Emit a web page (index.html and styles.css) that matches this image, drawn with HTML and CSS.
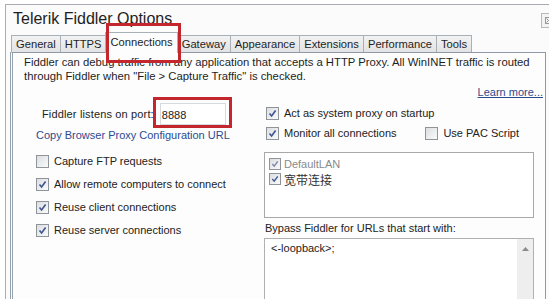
FILE: index.html
```html
<!DOCTYPE html>
<html>
<head>
<meta charset="utf-8">
<link rel="stylesheet" href="styles.css">
</head>
<body>
<div class="window">
  <div class="titlebar">
    <span class="title">Telerik Fiddler Options</span>
    <span class="close"><svg width="7" height="7" viewBox="0 0 7 7"><rect x="0.5" y="0.5" width="6" height="6" fill="none" stroke="#9a9a9a"/><path d="M1.5 1.5 L5.5 5.5 M5.5 1.5 L1.5 5.5" stroke="#9a9a9a"/></svg></span>
  </div>
  <div class="tabs">
    <span class="tab">General</span>
    <span class="tab">HTTPS</span>
    <span class="tab active">Connections</span>
    <span class="tab">Gateway</span>
    <span class="tab">Appearance</span>
    <span class="tab">Extensions</span>
    <span class="tab">Performance</span>
    <span class="tab">Tools</span>
  </div>
  <div class="panel">
    <p class="desc">Fiddler can debug traffic from any application that accepts a HTTP Proxy. All WinINET traffic is routed<br>through Fiddler when "File &gt; Capture Traffic" is checked.</p>
    <div class="learn"><span class="link underline">Learn more...</span></div>
    <div class="cols">
      <div class="left">
        <div class="port-row">
          <span class="label">Fiddler listens on port:</span>
          <span class="input">8888</span>
        </div>
        <span class="link copy">Copy Browser Proxy Configuration URL</span>
        <div class="checks">
          <label class="check"><span class="box"></span>Capture FTP requests</label>
          <label class="check"><span class="box on"><svg width="9" height="9" viewBox="0 0 9 9"><path d="M1.5 4.5 L3.6 7 L7.6 1.5" fill="none" stroke="#3d5590" stroke-width="1.6"/></svg></span>Allow remote computers to connect</label>
          <label class="check"><span class="box on"><svg width="9" height="9" viewBox="0 0 9 9"><path d="M1.5 4.5 L3.6 7 L7.6 1.5" fill="none" stroke="#3d5590" stroke-width="1.6"/></svg></span>Reuse client connections</label>
          <label class="check"><span class="box on"><svg width="9" height="9" viewBox="0 0 9 9"><path d="M1.5 4.5 L3.6 7 L7.6 1.5" fill="none" stroke="#3d5590" stroke-width="1.6"/></svg></span>Reuse server connections</label>
        </div>
      </div>
      <div class="right">
        <label class="check act"><span class="box on"><svg width="9" height="9" viewBox="0 0 9 9"><path d="M1.5 4.5 L3.6 7 L7.6 1.5" fill="none" stroke="#3d5590" stroke-width="1.6"/></svg></span>Act as system proxy on startup</label>
        <div class="monitor-row">
          <label class="check"><span class="box on"><svg width="9" height="9" viewBox="0 0 9 9"><path d="M1.5 4.5 L3.6 7 L7.6 1.5" fill="none" stroke="#3d5590" stroke-width="1.6"/></svg></span>Monitor all connections</label>
          <label class="check pac"><span class="box"></span>Use PAC Script</label>
        </div>
        <div class="listbox">
          <div class="item grey"><span class="box small on"><svg width="8" height="8" viewBox="0 0 9 9"><path d="M1.5 4.5 L3.6 7 L7.6 1.5" fill="none" stroke="#7a86a8" stroke-width="1.5"/></svg></span>DefaultLAN</div>
          <div class="item cjk"><span class="box small on"><svg width="8" height="8" viewBox="0 0 9 9"><path d="M1.5 4.5 L3.6 7 L7.6 1.5" fill="none" stroke="#3d5590" stroke-width="1.5"/></svg></span>宽带连接</div>
        </div>
        <div class="bypass-label">Bypass Fiddler for URLs that start with:</div>
        <div class="textarea">
          <span class="loop">&lt;-loopback&gt;;</span>
          <span class="scrollbar"><svg width="7" height="4" viewBox="0 0 7 4"><path d="M0 4 L3.5 0 L7 4 Z" fill="#8a8a8a"/></svg></span>
        </div>
      </div>
    </div>
  </div>
  <div class="mark mark-tab"></div>
  <div class="mark mark-port"></div>
</div>
</body>
</html>
```
FILE: styles.css
```css
html, body {
  margin: 0;
  padding: 0;
  background: #ffffff;
  overflow: hidden;
  width: 549px;
  height: 299px;
}
body {
  font-family: "Liberation Sans", Arial, sans-serif;
  font-size: 11px;
  color: #222;
}
.window {
  position: relative;
  margin: 4px 0 0 5px;
  width: 548px;
  height: 320px;
  border: 1px solid #a9adb2;
  border-bottom: none;
  background: #fbfbfb;
  box-sizing: border-box;
}
.titlebar {
  height: 26px;
  display: flex;
  align-items: center;
  justify-content: space-between;
  padding-left: 7px;
}
.title {
  font-size: 16px;
  color: #1e1e1e;
  margin-top: 1px;
}
.close {
  width: 8px;
  height: 13px;
  border: 1px solid #b8b8b8;
  border-right: none;
  display: flex;
  align-items: center;
  justify-content: center;
  background: #f3f3f3;
  margin-top: 4px;
  padding-left: 2px;
}
.tabs {
  display: flex;
  align-items: flex-end;
  padding-left: 5px;
  height: 21px;
  position: relative;
  z-index: 2;
}
.tab {
  height: 16px;
  line-height: 16px;
  padding: 0 4px;
  font-size: 11.2px;
  border: 1px solid #a8b0b8;
  border-bottom: none;
  border-right: none;
  background: linear-gradient(#f2f2f2, #e3e3e3);
  color: #1e1e1e;
}
.tab.active {
  height: 20px;
  line-height: 18px;
  background: #fdfdfd;
  border-right: 1px solid #a8b0b8;
  margin-bottom: -1px;
}
.tab.active + .tab {
  border-left: none;
}
.tabs .tab:last-child {
  border-right: 1px solid #a8b0b8;
}
.panel {
  margin-left: 4px;
  width: 536px;
  height: 260px;
  border: 1px solid #8d9aa5;
  border-left: 3px double #94a2ae;
  box-sizing: border-box;
  background: #fdfdfd;
  padding: 2px 2px 0 11px;
}
.desc {
  margin: 0;
  line-height: 14px;
  font-size: 11.3px;
  color: #1e1e1e;
  white-space: nowrap;
}
.link {
  color: #2e4a8e;
}
.underline {
  text-decoration: underline;
}
.learn {
  display: flex;
  justify-content: flex-end;
  line-height: 14px;
  margin-top: 2px;
}
.cols {
  display: grid;
  grid-template-columns: 240px 270px;
}
.left {
  display: flex;
  flex-direction: column;
  align-items: flex-start;
  padding-left: 12px;
}
.port-row {
  display: flex;
  align-items: center;
  height: 24px;
  margin-top: 3px;
  padding-left: 6px;
}
.label {
  letter-spacing: 0.15px;
  margin-right: 6px;
}
.input {
  width: 66px;
  height: 22px;
  line-height: 22px;
  box-sizing: border-box;
  border: 1px solid #d6d9dd;
  background: #fff;
  padding-left: 1px;
}
.copy {
  line-height: 14px;
  margin-top: 2px;
}
.checks {
  display: flex;
  flex-direction: column;
  gap: 7px;
  margin-top: 11px;
}
.check {
  display: flex;
  align-items: center;
  height: 16px;
  white-space: nowrap;
}
.box {
  width: 13px;
  height: 13px;
  box-sizing: border-box;
  border: 1px solid #8f9498;
  background: linear-gradient(135deg, #dcdee2, #fafafa);
  margin-right: 5px;
  display: flex;
  align-items: center;
  justify-content: center;
  flex-shrink: 0;
}
.box.small {
  width: 12px;
  height: 12px;
  margin-right: 3px;
}
.right {
  display: flex;
  flex-direction: column;
  align-items: flex-start;
}
.act {
  margin-top: 6px;
  margin-left: 2px;
}
.monitor-row {
  display: flex;
  margin-top: 4px;
  margin-left: 2px;
  width: 268px;
}
.pac {
  margin-left: auto;
  margin-right: 15px;
}
.listbox {
  width: 270px;
  height: 66px;
  box-sizing: border-box;
  border: 1px solid #a8a8a8;
  background: #fff;
  margin-top: 11px;
  padding: 3px 0 0 4px;
}
.item {
  display: flex;
  align-items: center;
  height: 16px;
}
.item.grey {
  color: #8a8a8a;
}
.item.cjk {
  font-family: "Noto Sans CJK SC", sans-serif;
  font-size: 12px;
  color: #333;
  margin-top: -1px;
}
.bypass-label {
  line-height: 14px;
  margin-top: 3px;
  margin-left: 1px;
}
.textarea {
  width: 270px;
  height: 80px;
  box-sizing: border-box;
  border: 1px solid #b0b0b0;
  background: #fff;
  margin-top: 3px;
  display: flex;
  justify-content: space-between;
}
.loop {
  padding: 3px 0 0 6px;
}
.scrollbar {
  width: 16px;
  background: #eeeeee;
  display: flex;
  justify-content: center;
  padding-top: 8px;
  box-sizing: border-box;
}
.mark {
  position: absolute;
  border: 3px solid #c3262c;
  box-sizing: border-box;
  z-index: 5;
}
.mark-tab {
  left: 100px;
  top: 18px;
  width: 75px;
  height: 40px;
}
.mark-port {
  left: 147px;
  top: 92px;
  width: 79px;
  height: 31px;
}
```
